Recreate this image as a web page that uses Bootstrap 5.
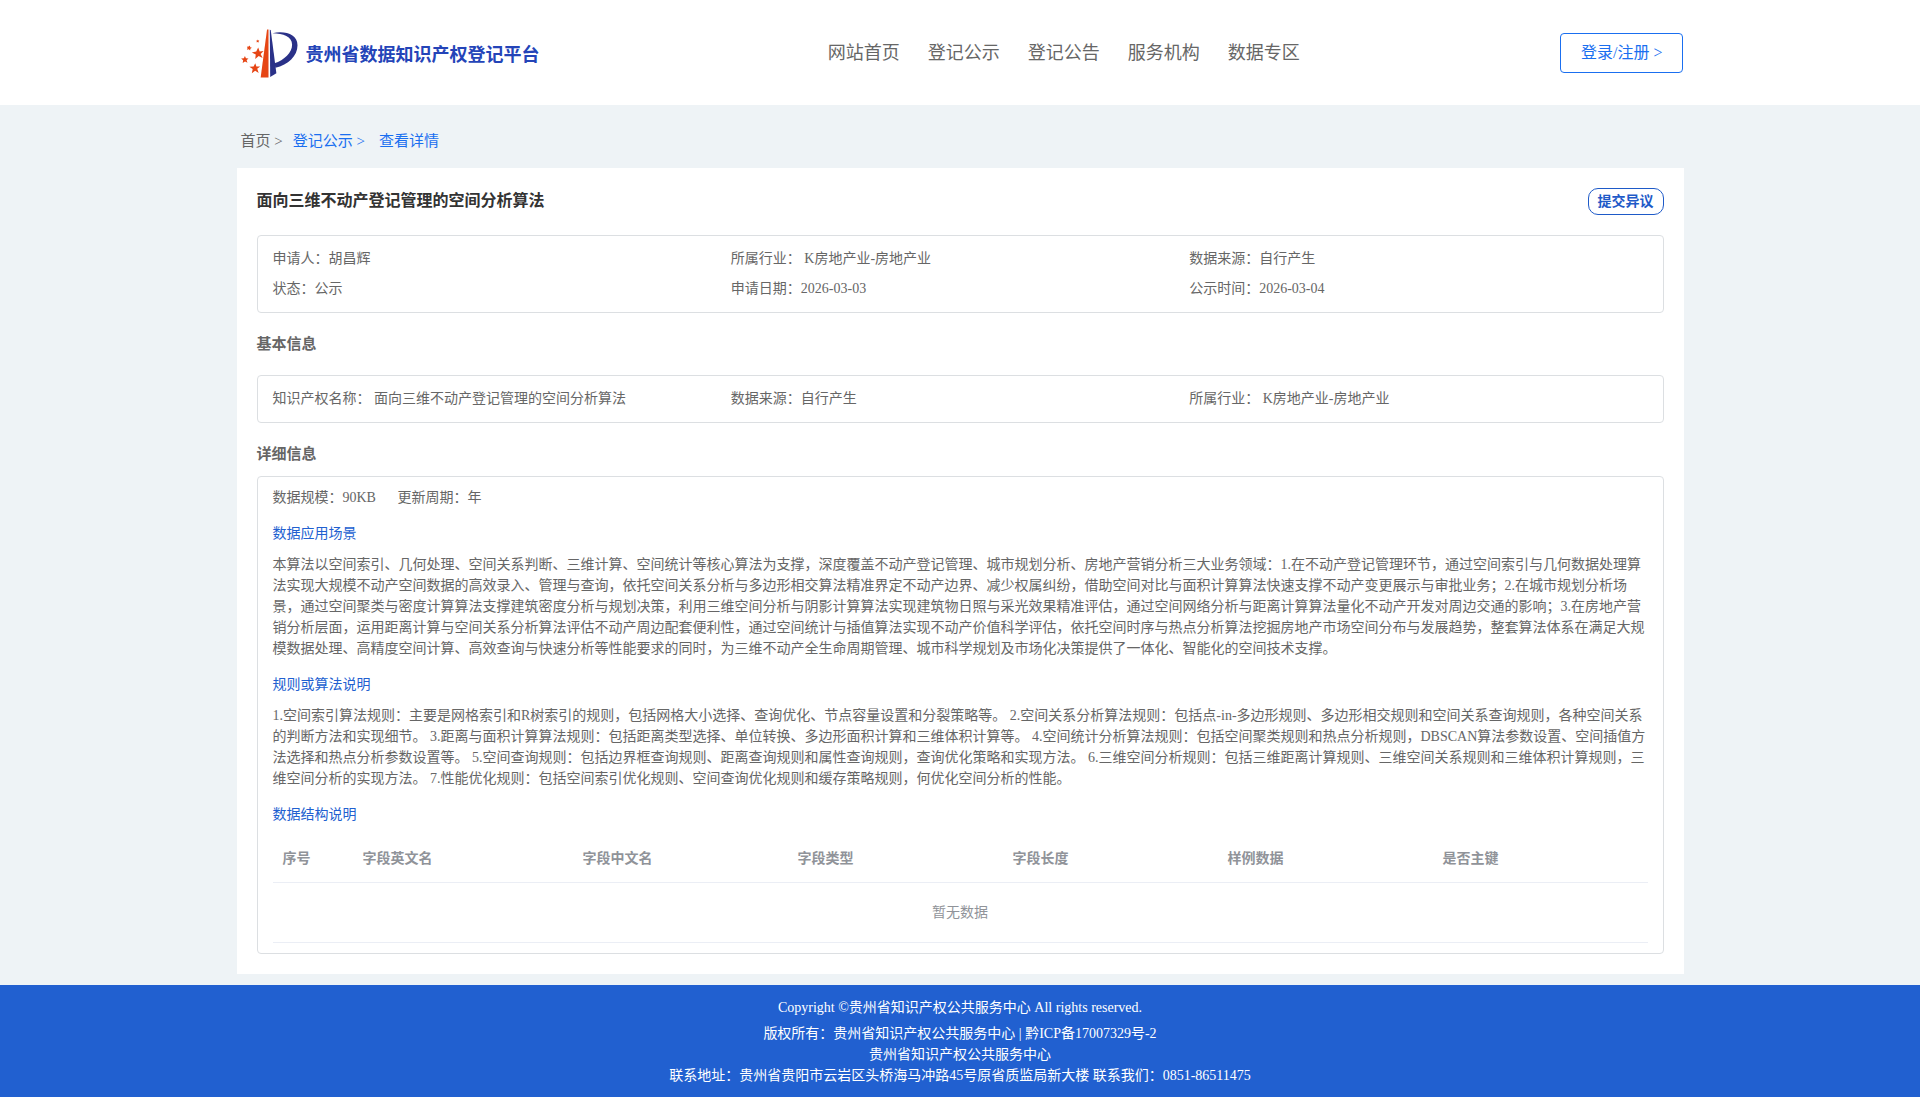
<!DOCTYPE html>
<html lang="zh-CN">
<head>
<meta charset="utf-8">
<meta name="viewport" content="width=device-width, initial-scale=1">
<title>贵州省数据知识产权登记平台</title>
<link href="https://cdn.jsdelivr.net/npm/bootstrap@5.3.0/dist/css/bootstrap.min.css" rel="stylesheet">
<style>
  body {
    background: #eef3f6;
    color: #666;
    font-family: "Liberation Serif", "Noto Sans CJK SC", serif;
    font-size: 14px;
    line-height: 21px;
  }
  a { text-decoration: none; }
  .page-wrap { max-width: 1447px; width: 100%; }
  .brand-name { color: #2444b8; font-size: 18px; font-weight: 700; padding-top: 6px; }
  .site-nav { gap: 8px 28px; padding-left: 28px; }
  .site-nav a { color: #666; font-size: 18px; line-height: 28px; }
  .btn-login { --bs-btn-color: #1a6ff0; --bs-btn-border-color: #1a6ff0; --bs-btn-hover-bg: #1a6ff0; --bs-btn-hover-color: #fff;
    --bs-btn-font-size: 16px; --bs-btn-padding-x: 20px; --bs-btn-padding-y: 8px; --bs-btn-border-radius: 4px; line-height: 22px; }
  .btn-objection { --bs-btn-color: #1e5ac8; --bs-btn-border-color: #1e5ac8; --bs-btn-hover-bg: #1e5ac8; --bs-btn-hover-color: #fff;
    --bs-btn-font-size: 14px; --bs-btn-font-weight: 700; --bs-btn-padding-x: 9px; --bs-btn-padding-y: 1px; --bs-btn-border-radius: 10px; line-height: 23px; }
  .crumbs { font-size: 15px; line-height: 23px; padding: 25px 4px 15px; gap: 10px; }
  .crumbs a { color: #666; }
  .crumbs .crumb-on { color: #1a6ff0; }
  .panel { padding: 20px; }
  .panel-title { color: #333; font-size: 16px; font-weight: 700; line-height: 26px; }
  .panel-sub { font-size: 15px; font-weight: 700; line-height: 22px; margin: 20px 0; }
  .panel-sub-tight { margin-bottom: 11px; }
  .info-box { border: 1px solid #dcdfe2; border-radius: 4px; padding: 8px 15px; }
  .info-box .row > div { line-height: 30px; }
  .detail-box { padding: 10px 15px; }
  .detail-box p { margin-bottom: 15px; }
  .scale-item { margin-right: 18px; }
  .blue-head { color: #2160d0; font-size: 14px; font-weight: 400; line-height: 21px; margin-bottom: 10px; }
  .field-table th { color: #909399; font-weight: 700; padding: 12px 10px; line-height: 23px; }
  .field-table td { color: #909399; padding: 19px 10px; line-height: 21px; }
  .field-table { --bs-table-bg: transparent; --bs-table-border-color: #ebeef5; table-layout: fixed; }
  .field-table .col-no { width: 80px; }
  .field-table .col-en { width: 16%; }
  .page-main { padding-bottom: 11px; }
  .site-foot { background: #2160d0; padding: 12px 0 11px; }
  .copyright { margin-bottom: 5px; }
</style>
<script src="https://cdn.jsdelivr.net/npm/bootstrap@5.3.0/dist/js/bootstrap.bundle.min.js" defer></script>
</head>
<body>
<header class="bg-white">
  <div class="page-wrap mx-auto d-flex flex-wrap justify-content-between align-items-center py-4">
    <a href="#" class="d-flex align-items-center gap-2 ps-1">
      <svg width="57" height="57" viewBox="0 0 58 57" aria-hidden="true">
        <path fill="#e64514" d="M26.500 5L28 5V54H20Z"/>
        <path fill="#2a3188" d="M29.300 5L30.300 6L36 49.500L29.700 53.500Z"/>
        <path fill="#2a3188" d="M32 8.800C45 6 57.500 10 57.500 21C57.500 32 48 41 35 44L34 39.500C44 36 52 28.500 52 20.500C52 12 43 9 32 8.800Z"/>
        <g fill="#e64514">
          <path d="M17.500 23.500l1.500 4 4-.5-3 3 2 4-4-2-3.500 3 .5-4.500-4-2 4.500-1z"/>
          <path d="M14.500 39.500l1.200 3.200h3.800l-3 2.400 1.500 4.200-3.600-2.300-3.400 2.500.9-4.200-3.400-2.200 4.300-.4z"/>
          <path d="M4 32l1 2.400 2.600.1-1.900 1.800.9 2.700-2.500-1.400-2.400 1.600.5-2.800-2.100-1.700 2.800-.3z"/>
          <path d="M9 21.500l.4 1.600 1.700.6-1.600.9-.2 1.800-1.400-1.100-1.900.5.700-1.800-.7-1.400 1.800-.1z"/>
          <path d="M17.200 15.300l.4 1 1.100.1-.8.7.3 1.200-1.200-.5-1 .6.100-1.200-.8-.7 1.300-.2z"/>
        </g>
      </svg>
      <span class="brand-name">贵州省数据知识产权登记平台</span>
    </a>
    <nav class="site-nav d-flex flex-wrap" aria-label="主导航">
      <a href="#">网站首页</a><a href="#">登记公示</a><a href="#">登记公告</a><a href="#">服务机构</a><a href="#">数据专区</a>
    </nav>
    <button type="button" class="btn btn-login">登录/注册 &gt;</button>
  </div>
</header>

<main class="page-wrap page-main mx-auto">
  <nav class="crumbs d-flex flex-wrap" aria-label="面包屑">
    <a href="#">首页 &gt;</a>
    <a href="#" class="crumb-on pe-1">登记公示 &gt;</a>
    <span class="crumb-on">查看详情</span>
  </nav>

  <section class="panel bg-white">
    <div class="d-flex justify-content-between align-items-start mb-3 pb-1">
      <h1 class="panel-title mb-0">面向三维不动产登记管理的空间分析算法</h1>
      <button type="button" class="btn btn-objection">提交异议</button>
    </div>

    <div class="info-box">
      <div class="row g-0">
        <div class="col-4">申请人：胡昌辉</div>
        <div class="col-4">所属行业： K房地产业-房地产业</div>
        <div class="col-4">数据来源：自行产生</div>
        <div class="col-4">状态：公示</div>
        <div class="col-4">申请日期：2026-03-03</div>
        <div class="col-4">公示时间：2026-03-04</div>
      </div>
    </div>

    <h2 class="panel-sub">基本信息</h2>
    <div class="info-box">
      <div class="row g-0">
        <div class="col-4">知识产权名称： 面向三维不动产登记管理的空间分析算法</div>
        <div class="col-4">数据来源：自行产生</div>
        <div class="col-4">所属行业： K房地产业-房地产业</div>
      </div>
    </div>

    <h2 class="panel-sub panel-sub-tight">详细信息</h2>
    <div class="info-box detail-box">
      <p><span class="scale-item">数据规模：90KB</span> <span>更新周期：年</span></p>
      <h3 class="blue-head">数据应用场景</h3>
      <p>本算法以空间索引、几何处理、空间关系判断、三维计算、空间统计等核心算法为支撑，深度覆盖不动产登记管理、城市规划分析、房地产营销分析三大业务领域：1.在不动产登记管理环节，通过空间索引与几何数据处理算法实现大规模不动产空间数据的高效录入、管理与查询，依托空间关系分析与多边形相交算法精准界定不动产边界、减少权属纠纷，借助空间对比与面积计算算法快速支撑不动产变更展示与审批业务；2.在城市规划分析场景，通过空间聚类与密度计算算法支撑建筑密度分析与规划决策，利用三维空间分析与阴影计算算法实现建筑物日照与采光效果精准评估，通过空间网络分析与距离计算算法量化不动产开发对周边交通的影响；3.在房地产营销分析层面，运用距离计算与空间关系分析算法评估不动产周边配套便利性，通过空间统计与插值算法实现不动产价值科学评估，依托空间时序与热点分析算法挖掘房地产市场空间分布与发展趋势，整套算法体系在满足大规模数据处理、高精度空间计算、高效查询与快速分析等性能要求的同时，为三维不动产全生命周期管理、城市科学规划及市场化决策提供了一体化、智能化的空间技术支撑。</p>
      <h3 class="blue-head">规则或算法说明</h3>
      <p>1.空间索引算法规则：主要是网格索引和R树索引的规则，包括网格大小选择、查询优化、节点容量设置和分裂策略等。 2.空间关系分析算法规则：包括点-in-多边形规则、多边形相交规则和空间关系查询规则，各种空间关系的判断方法和实现细节。 3.距离与面积计算算法规则：包括距离类型选择、单位转换、多边形面积计算和三维体积计算等。 4.空间统计分析算法规则：包括空间聚类规则和热点分析规则，DBSCAN算法参数设置、空间插值方法选择和热点分析参数设置等。 5.空间查询规则：包括边界框查询规则、距离查询规则和属性查询规则，查询优化策略和实现方法。 6.三维空间分析规则：包括三维距离计算规则、三维空间关系规则和三维体积计算规则，三维空间分析的实现方法。 7.性能优化规则：包括空间索引优化规则、空间查询优化规则和缓存策略规则，何优化空间分析的性能。</p>
      <h3 class="blue-head">数据结构说明</h3>
      <table class="table field-table mb-0">
        <thead>
          <tr><th class="col-no">序号</th><th class="col-en">字段英文名</th><th>字段中文名</th><th>字段类型</th><th>字段长度</th><th>样例数据</th><th>是否主键</th></tr>
        </thead>
        <tbody>
          <tr><td colspan="7" class="text-center">暂无数据</td></tr>
        </tbody>
      </table>
    </div>
  </section>
</main>

<footer class="site-foot text-white text-center">
  <p class="copyright">Copyright ©贵州省知识产权公共服务中心 All rights reserved.</p>
  <p class="mb-0">版权所有：贵州省知识产权公共服务中心 | 黔ICP备17007329号-2</p>
  <p class="mb-0">贵州省知识产权公共服务中心</p>
  <p class="mb-0">联系地址：贵州省贵阳市云岩区头桥海马冲路45号原省质监局新大楼 联系我们：0851-86511475</p>
</footer>
</body>
</html>
